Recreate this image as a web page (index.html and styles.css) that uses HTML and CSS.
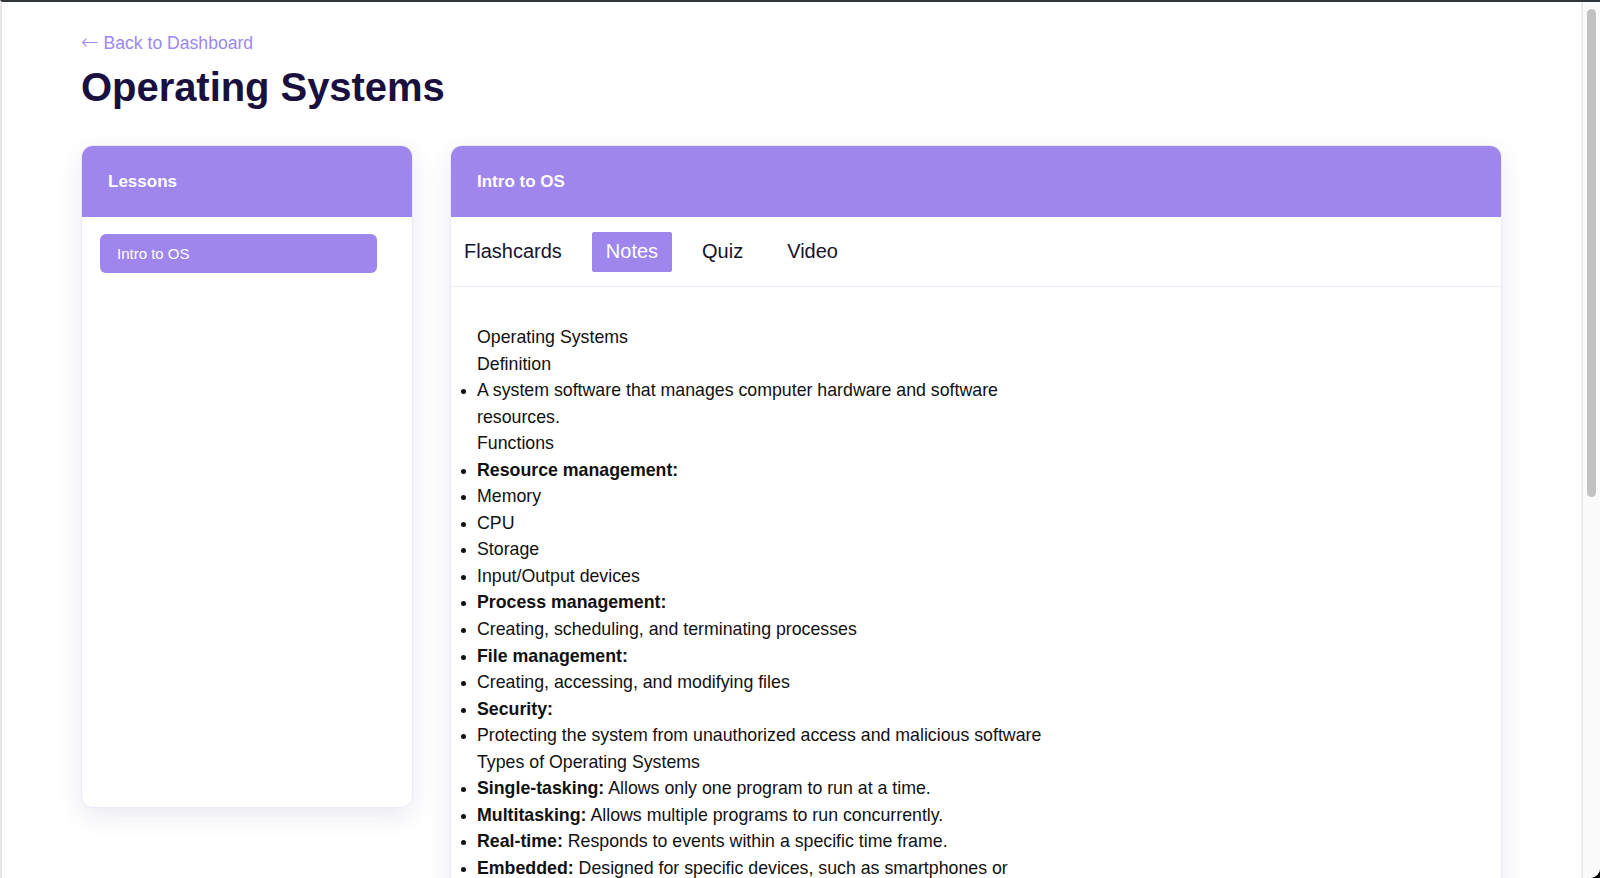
FILE: index.html
```html
<!DOCTYPE html>
<html lang="en">
<head>
<meta charset="utf-8">
<title>Operating Systems</title>
<link rel="stylesheet" href="styles.css">
</head>
<body>
<div class="window">
  <main class="main">
    <a class="back" href="#"><span class="arrow">&larr;</span> Back to Dashboard</a>
    <h1 class="title">Operating Systems</h1>
    <div class="layout">
      <aside class="card lessons">
        <div class="card-header">Lessons</div>
        <div class="lessons-body">
          <button class="lesson active">Intro to OS</button>
        </div>
      </aside>
      <section class="card lesson-card">
        <div class="card-header">Intro to OS</div>
        <nav class="tabs">
          <button class="tab">Flashcards</button>
          <button class="tab active">Notes</button>
          <button class="tab">Quiz</button>
          <button class="tab">Video</button>
        </nav>
        <div class="notes">
          <p class="heading">Operating Systems</p>
          <p class="heading">Definition</p>
          <ul>
            <li>A system software that manages computer hardware and software resources.</li>
          </ul>
          <p class="heading">Functions</p>
          <ul>
            <li><strong>Resource management:</strong></li>
            <li>Memory</li>
            <li>CPU</li>
            <li>Storage</li>
            <li>Input/Output devices</li>
            <li><strong>Process management:</strong></li>
            <li>Creating, scheduling, and terminating processes</li>
            <li><strong>File management:</strong></li>
            <li>Creating, accessing, and modifying files</li>
            <li><strong>Security:</strong></li>
            <li>Protecting the system from unauthorized access and malicious software</li>
          </ul>
          <p class="heading">Types of Operating Systems</p>
          <ul>
            <li><strong>Single-tasking:</strong> Allows only one program to run at a time.</li>
            <li><strong>Multitasking:</strong> Allows multiple programs to run concurrently.</li>
            <li><strong>Real-time:</strong> Responds to events within a specific time frame.</li>
            <li><strong>Embedded:</strong> Designed for specific devices, such as smartphones or appliances.</li>
          </ul>
        </div>
      </section>
    </div>
  </main>
  <div class="scrollbar"><div class="thumb"></div></div>
</div>
</body>
</html>
```
FILE: styles.css
```css
* { box-sizing: border-box; }

html {
  background: #000;
  height: 100%;
}

body {
  margin: 0;
  height: 100%;
  font-family: "Liberation Sans", Arial, Helvetica, sans-serif;
  color: #111;
}

.window {
  display: flex;
  height: 100vh;
  background: #fff;
  border-top: 2px solid #30363b;
  border-left: 2px solid #e6e6e6;
  border-bottom-right-radius: 10px;
  overflow: hidden;
}

.main {
  flex: 1;
  min-width: 0;
  padding: 28px 79px 0;
  overflow: hidden;
}

.scrollbar {
  width: 19px;
  flex: none;
  background: #fbfbfb;
  border-left: 2px solid #ececec;
  padding: 7px 4px 0 4px;
}

.thumb {
  width: 9px;
  height: 488px;
  border-radius: 5px;
  background: #c2c2c2;
}

.back {
  display: inline-block;
  font-size: 17.6px;
  line-height: 26px;
  color: #9d87ee;
  text-decoration: none;
}

.arrow {
  font-family: "DejaVu Sans", sans-serif;
  font-size: 21px;
  line-height: 1;
  font-weight: 300;
}

.title {
  margin: 7px 0 34px;
  font-size: 40px;
  line-height: 48px;
  font-weight: 700;
  color: #1a1040;
  letter-spacing: -0.05px;
}

.layout {
  display: grid;
  grid-template-columns: 332px 1fr;
  gap: 37px;
  align-items: start;
}

.card {
  background: #fff;
  border: 1px solid #ece9f8;
  border-radius: 12px;
  overflow: hidden;
  box-shadow: 0 8px 24px rgba(70, 55, 140, 0.11);
}

.card-header {
  height: 71px;
  display: flex;
  align-items: center;
  padding: 0 26px;
  background: #9e86ed;
  color: #fff;
  font-size: 17px;
  font-weight: 700;
}

.lessons {
  height: 663px;
}

.lessons-body {
  padding: 17px 18px;
}

.lesson {
  display: block;
  width: 277px;
  height: 39px;
  padding: 0 17px;
  border: none;
  border-radius: 6px;
  background: #9e86ed;
  color: #fff;
  font-family: inherit;
  font-size: 15px;
  text-align: left;
}

.lesson-card {
  min-height: 900px;
}

.tabs {
  display: flex;
  gap: 16px;
  align-items: center;
  height: 70px;
  border-bottom: 1px solid #eeebf8;
}

.tab {
  height: 40px;
  padding: 0 14px;
  border: none;
  border-radius: 2px;
  background: transparent;
  color: #16132e;
  font-family: inherit;
  font-size: 20px;
}

.tab:first-child {
  margin-left: -1px;
}

.tab.active {
  background: #9e86ed;
  color: #fff;
}

.notes {
  padding: 37px 26px;
  max-width: 640px;
  font-size: 17.75px;
  line-height: 26.55px;
  color: #111;
}

.notes .heading {
  margin: 0;
}

.notes ul {
  margin: 0;
  padding: 0;
  list-style: disc outside;
}

.notes li::marker {
  font-size: 16px;
}

.notes strong {
  font-weight: 700;
}
```
